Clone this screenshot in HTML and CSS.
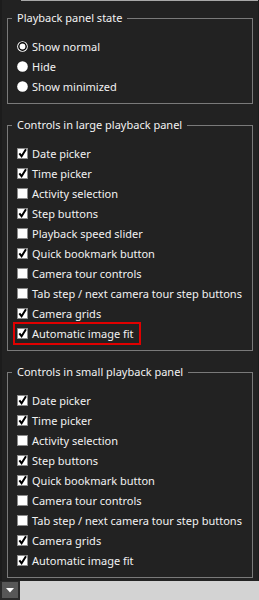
FILE: index.html
```html
<!DOCTYPE html>
<html lang="en">
<head>
  <meta charset="UTF-8">
  <meta name="viewport" content="width=device-width, initial-scale=1.0">
  <title>Playback panel settings</title>
  <link rel="stylesheet" href="styles.css">
</head>
<body>
  <svg class="defs" width="0" height="0" aria-hidden="true">
    <symbol id="box-on" viewBox="0 0 12 12">
      <rect x="0.5" y="0.5" width="11" height="11" fill="#fff" stroke="#8a8a8a"/>
      <path d="M2.6 5.8 L5 9 L9.8 1.4" fill="none" stroke="#000" stroke-width="2.2"/>
    </symbol>
    <symbol id="box-off" viewBox="0 0 12 12">
      <rect x="0.5" y="0.5" width="11" height="11" fill="#fff" stroke="#8a8a8a"/>
    </symbol>
    <symbol id="radio-on" viewBox="0 0 12 12">
      <circle cx="6" cy="6" r="5.8" fill="#fff"/>
      <circle cx="6" cy="6" r="4" fill="none" stroke="#000" stroke-width="1.6"/>
    </symbol>
    <symbol id="radio-off" viewBox="0 0 12 12">
      <circle cx="6" cy="6" r="5.8" fill="#fff"/>
    </symbol>
  </svg>

  <div class="panel">
    <div class="top-edge"></div>

    <!-- Playback panel state -->
    <fieldset class="group">
      <legend>Playback panel state</legend>
      <ul class="options">
        <li><svg class="mark"><use href="#radio-on"/></svg>Show normal</li>
        <li><svg class="mark"><use href="#radio-off"/></svg>Hide</li>
        <li><svg class="mark"><use href="#radio-off"/></svg>Show minimized</li>
      </ul>
    </fieldset>

    <!-- Large playback panel -->
    <fieldset class="group">
      <legend>Controls in large playback panel</legend>
      <ul class="options">
        <li><svg class="mark"><use href="#box-on"/></svg>Date picker</li>
        <li><svg class="mark"><use href="#box-on"/></svg>Time picker</li>
        <li><svg class="mark"><use href="#box-off"/></svg>Activity selection</li>
        <li><svg class="mark"><use href="#box-on"/></svg>Step buttons</li>
        <li><svg class="mark"><use href="#box-off"/></svg>Playback speed slider</li>
        <li><svg class="mark"><use href="#box-on"/></svg>Quick bookmark button</li>
        <li><svg class="mark"><use href="#box-off"/></svg>Camera tour controls</li>
        <li><svg class="mark"><use href="#box-off"/></svg>Tab step / next camera tour step buttons</li>
        <li><svg class="mark"><use href="#box-on"/></svg>Camera grids</li>
        <li class="highlight"><svg class="mark"><use href="#box-on"/></svg>Automatic image fit</li>
      </ul>
    </fieldset>

    <!-- Small playback panel -->
    <fieldset class="group">
      <legend>Controls in small playback panel</legend>
      <ul class="options">
        <li><svg class="mark"><use href="#box-on"/></svg>Date picker</li>
        <li><svg class="mark"><use href="#box-on"/></svg>Time picker</li>
        <li><svg class="mark"><use href="#box-off"/></svg>Activity selection</li>
        <li><svg class="mark"><use href="#box-on"/></svg>Step buttons</li>
        <li><svg class="mark"><use href="#box-on"/></svg>Quick bookmark button</li>
        <li><svg class="mark"><use href="#box-off"/></svg>Camera tour controls</li>
        <li><svg class="mark"><use href="#box-off"/></svg>Tab step / next camera tour step buttons</li>
        <li><svg class="mark"><use href="#box-on"/></svg>Camera grids</li>
        <li><svg class="mark"><use href="#box-on"/></svg>Automatic image fit</li>
      </ul>
    </fieldset>
  </div>

  <div class="footer">
    <button class="toggle" aria-label="Collapse">
      <svg width="8" height="5" viewBox="0 0 8 5"><path d="M0 0 H8 L4 4.5 Z" fill="#fff"/></svg>
    </button>
  </div>
</body>
</html>
```

FILE: styles.css
```css
body {
  margin: 0;
  background-color: #d3d3d3;
  font-family: "Noto Sans", "Open Sans", sans-serif;
  font-size: 11px;
  color: #f2f2f2;
}
.defs {
  position: absolute;
  width: 0;
  height: 0;
}
.panel {
  width: 259px;
  height: 581px;
  box-sizing: border-box;
  background-color: #222;
  border-left: 2px solid #1c1c1c;
  border-right: 1px solid #1c1c1c;
  overflow: hidden;
}
.top-edge {
  height: 1px;
  margin-left: 19px;
  background-color: #a8a8a8;
}
.group {
  margin: 8px 5px 0 5px;
  padding: 0 0 7px 0;
  border: 1px solid #7a7a7a;
  min-width: 0;
}
.group + .group {
  margin-top: 12px;
}
.group legend {
  margin-left: 4px;
  padding: 0 5px;
  line-height: 18px;
}
.options {
  list-style-type: none;
  margin: 0;
  padding: 9px 0 0 9px;
}
.options li {
  display: flex;
  align-items: center;
  height: 20px;
  white-space: nowrap;
}
.mark {
  width: 11px;
  height: 11px;
  margin-right: 4px;
  flex-shrink: 0;
}
.options li.highlight {
  width: fit-content;
  height: 19px;
  margin: -1px 0 -2px -4px;
  padding: 0 5px 0 2px;
  border: 2px solid #e00000;
}
.footer {
  height: 19px;
}
.toggle {
  display: block;
  width: 20px;
  height: 19px;
  padding: 0;
  border: 2px solid #2a2a2a;
  border-top-width: 1px;
  background-color: #575757;
  cursor: pointer;
}
.toggle svg {
  display: block;
  margin: 0 auto;
}
```
